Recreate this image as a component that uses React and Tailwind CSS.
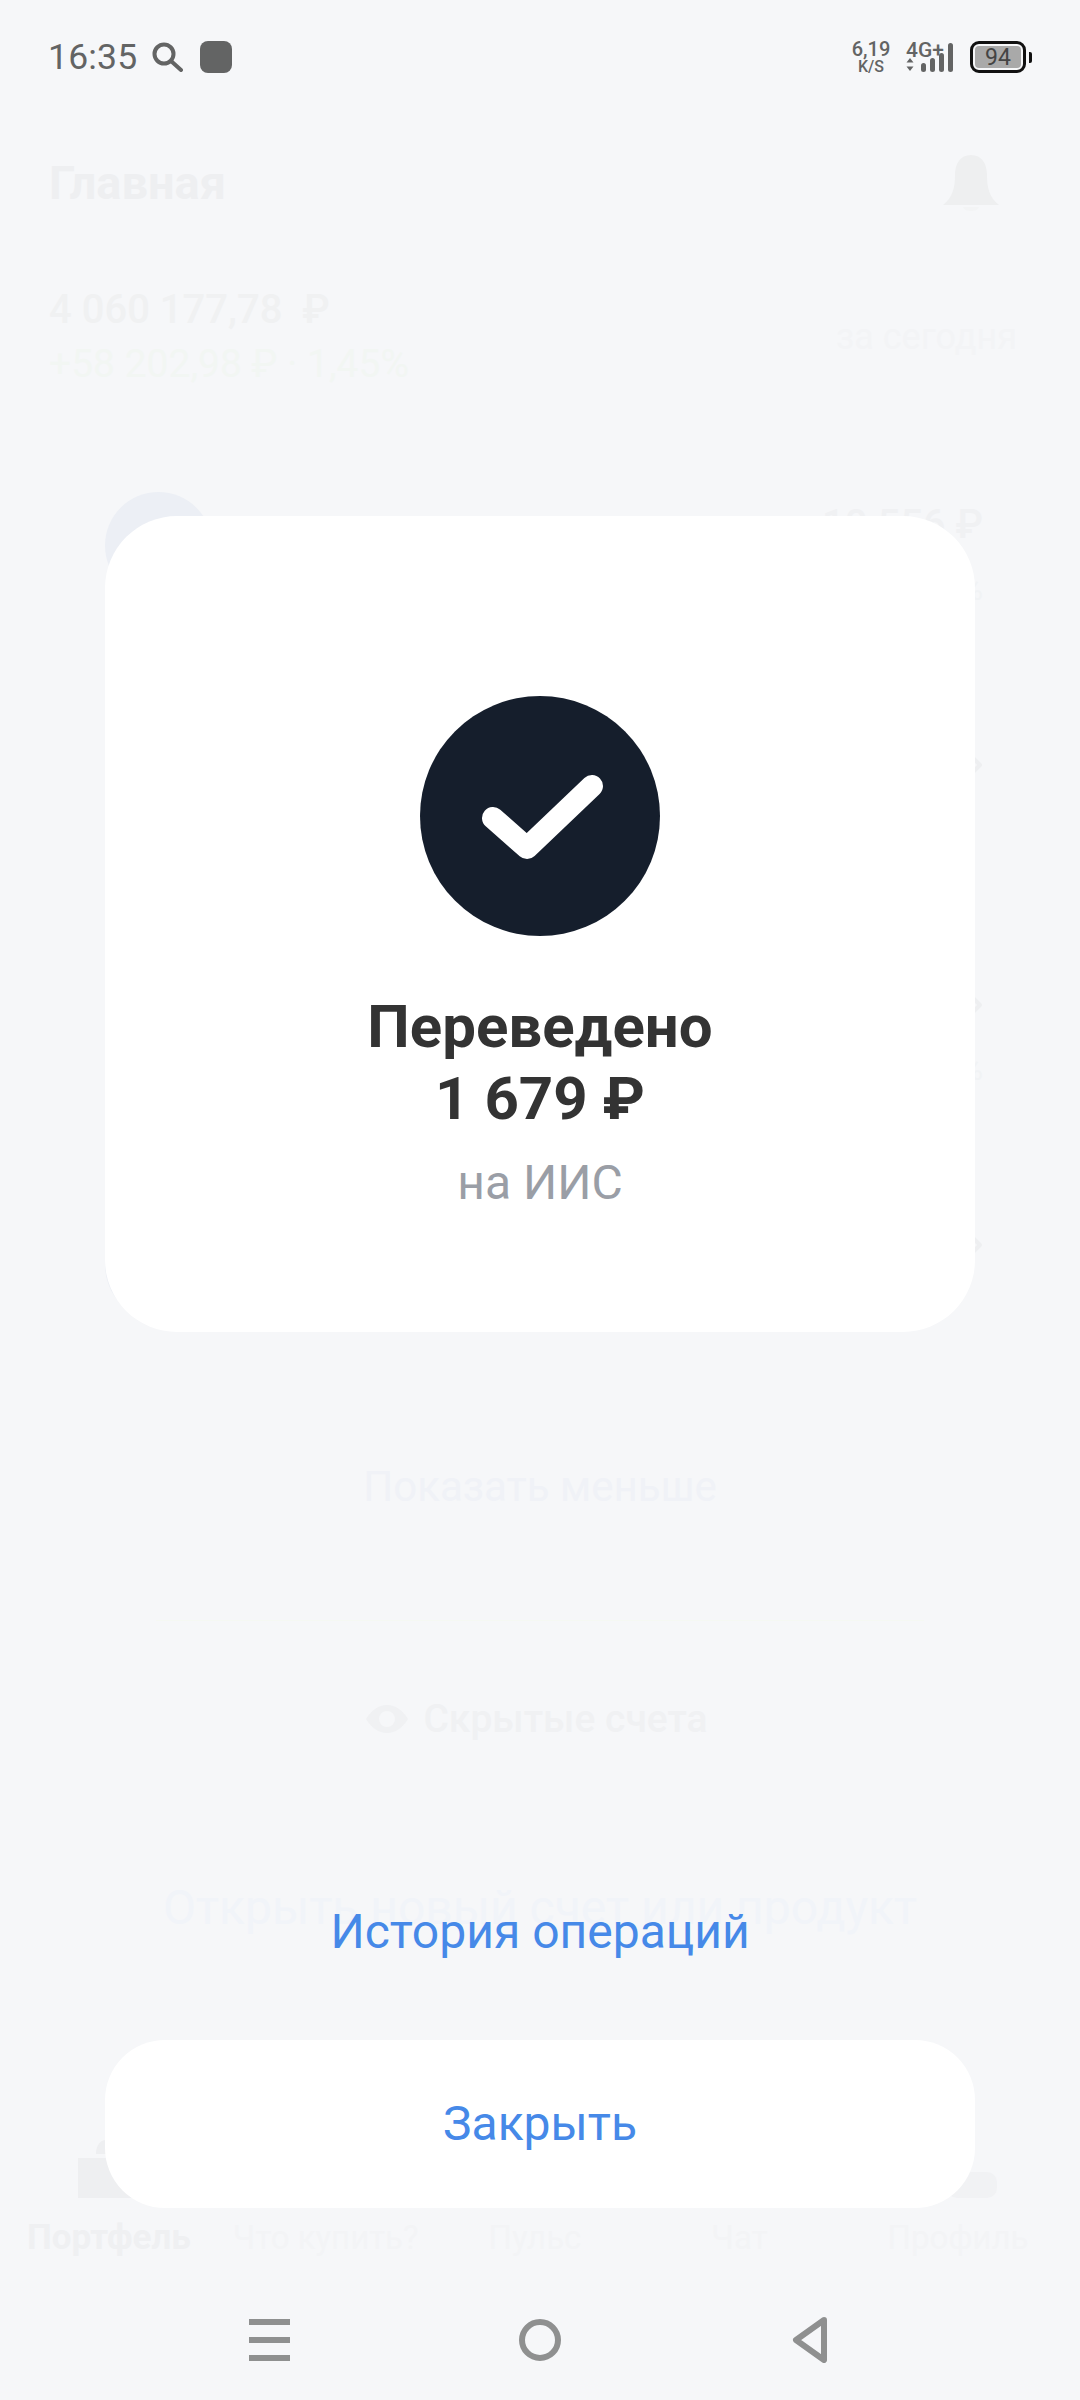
const font = { fontFamily: "Roboto, sans-serif" }

function Chevron() {
  return (
    <svg width="16" height="26" viewBox="0 0 16 26" fill="none" stroke="#eeeff1" strokeWidth="4" strokeLinecap="round" strokeLinejoin="round">
      <path d="M3 3l10 10L3 23" />
    </svg>
  )
}

function GhostRow({amount, sub, chevron}) {
  return (
    <div className="flex h-[240px] items-start">
      <div className="size-[107px] rounded-full bg-[#eceff5]" />
      <div className="ml-auto flex h-[150px] flex-col items-end pt-[10px]">
        <div className="flex h-[46px] items-center gap-2 text-[40px] font-medium text-[#f0f1f3]">
          {amount}
          {chevron && <Chevron />}
        </div>
        <div className="mt-[22px] text-[30px] leading-[40px] text-[#f1f3f5]">{sub}</div>
      </div>
    </div>
  )
}

// faded portfolio page that shows through the scrim
function BackgroundPage() {
  return (
    <div className="pt-[153px]">
      <div className="flex h-[60px] items-center justify-between pl-[49px] pr-[80px]">
        <span className="text-[47px] font-bold text-[#eeeff1]">Главная</span>
        <svg width="58" height="56" viewBox="0 0 58 56" fill="#eeeff0">
          <path d="M29 0c-11 0-16 9-16 20 0 12-2 22-12 30h56c-10-8-12-18-12-30C45 9 40 0 29 0z" />
          <path d="M21 52h16c-1 3-4 4-8 4s-7-1-8-4z" fill="#f3f4f5" />
        </svg>
      </div>

      <div className="mt-[70px] flex items-center justify-between pl-[49px] pr-[63px]">
        <div>
          <div className="text-[40px] font-medium leading-[54px] text-[#f0f1f2]">4 060 177,78&nbsp; ₽</div>
          <div className="text-[39px] leading-[54px] text-[#f2f6f3]">+58 202,98 ₽ · 1,45%</div>
        </div>
        <div className="text-[36px] text-[#f3f4f6]">за сегодня</div>
      </div>

      <div className="mt-[101px] pl-[105px] pr-[97px]">
        <GhostRow amount="10 556 ₽" sub="0 %" />
        <GhostRow chevron sub="" />
        <GhostRow chevron sub="0 %" />
        <GhostRow chevron sub="" />
      </div>

      <div className="mt-[10px] text-center text-[42px] leading-[50px] text-[#f0f2f7]">Показать меньше</div>
      <div className="mx-auto mt-[108px] h-px w-[768px] bg-[#f5f8f3]" />
      <div className="mt-[73px] flex h-[50px] items-center justify-center gap-[15px] pr-[6px] text-[39px] font-medium text-[#f0f1f3]">
        <svg width="42" height="28" viewBox="0 0 42 28" fill="#f0f1f3">
          <path fillRule="evenodd" d="M21 0C12 0 5 6 0 14c5 8 12 14 21 14s16-6 21-14C37 6 30 0 21 0zm0 22a8 8 0 110-16 8 8 0 010 16z" />
        </svg>
        Скрытые счета
      </div>
      <div className="mt-[136px] text-center text-[48px] leading-[56px] text-[#f1f4f9]">Открыть новый счет или продукт</div>

      <div className="mt-[204px] flex h-[58px] items-end justify-between pl-[78px] pr-[83px]">
        <svg width="60" height="58" viewBox="0 0 60 58" fill="#eeeff1">
          <path d="M18 14c0-8 4-14 10-14s10 6 10 14zM0 18h60v40H0z" />
        </svg>
        <div className="h-[26px] w-[50px] rounded-[10px] bg-[#f1f2f4]" />
      </div>
      <div className="mt-[20px] flex h-[40px] items-center text-[33px] text-[#f3f4f6]">
        <span className="ml-[27px] text-[35px] font-bold text-[#eff0f2]">Портфель</span>
        <span className="ml-[42px]">Что купить?</span>
        <span className="ml-[70px]">Пульс</span>
        <span className="ml-[130px]">Чат</span>
        <span className="ml-[120px]">Профиль</span>
      </div>
    </div>
  )
}

function StatusBar() {
  return (
    <div className="relative flex h-[100px] items-start justify-between pl-[48px] pr-[48px] pt-[41px] text-[#636464]">
      <div className="flex h-[32px] items-center">
        <span className="text-[35.500px] leading-[32px] tracking-[0.2px]">16:35</span>
        <svg className="ml-[15px]" width="31" height="30" viewBox="0 0 31 30" fill="none" stroke="#636464" strokeWidth="4">
          <circle cx="12" cy="12" r="9.500" />
          <path d="M19 19l10 9" strokeLinecap="round" />
        </svg>
        <div className="ml-[17px] size-[32px] rounded-[8px] bg-[#636464]" />
      </div>

      <div className="flex h-[32px] items-center">
        <div className="flex w-[40px] flex-col items-center font-medium">
          <span className="text-[20px] leading-[20px]">6,19</span>
          <span className="text-[16px] leading-[16px]">K/S</span>
        </div>
        <div className="ml-[15px] flex h-[32px] w-[48px] flex-col">
          <span className="text-[21px] font-medium leading-[18px]">4G+</span>
        </div>
        <svg className="ml-[-48px]" width="48" height="32" viewBox="0 0 48 32" fill="#636464">
          <path d="M4 17l3.500 4.500h-7zM4 30l3.500-4.500h-7z" />
          <rect x="15" y="22" width="5" height="9" rx="2.500" />
          <rect x="24" y="17" width="5" height="14" rx="2.500" />
          <rect x="33" y="12" width="5" height="19" rx="2.500" />
          <rect x="42" y="2" width="5" height="29" rx="2.500" />
        </svg>
        <div className="ml-[16px] flex h-[32px] w-[56px] items-center justify-center rounded-[9px] border-[3px] border-[#111111] p-[2px]">
          <div className="flex h-full w-full items-center justify-center rounded-[4px] bg-[#a9a9a9] text-[23px] leading-none text-[#444444]">94</div>
        </div>
        <div className="ml-[3px] h-[11px] w-[3px] rounded-r-[2px] bg-[#111111]" />
      </div>
    </div>
  )
}

function NavBar() {
  return (
    <div className="mt-[109px] flex gap-[228px] pl-[249px]">
      <svg width="42" height="46" viewBox="0 0 42 46" fill="#8f9090">
        <rect x="0" y="2" width="41" height="6" />
        <rect x="0" y="20" width="41" height="6" />
        <rect x="0" y="38" width="41" height="6" />
      </svg>
      <svg width="42" height="46" viewBox="0 0 42 46" fill="none" stroke="#8f9090" strokeWidth="6">
        <circle cx="21" cy="23" r="18" />
      </svg>
      <svg width="42" height="46" viewBox="0 0 42 46" fill="none" stroke="#8f9090" strokeWidth="6" strokeLinejoin="round">
        <path d="M35 3L7 23l28 20z" />
      </svg>
    </div>
  )
}

export default function App() {
  return (
    <div className="relative h-[2400px] w-[1080px] overflow-hidden bg-[#f6f7f9]" style={font}>
      <BackgroundPage />

      <div className="absolute inset-0 flex flex-col">
        <StatusBar />

        <div className="mx-[105px] mt-[416px] flex h-[816px] flex-col items-center rounded-[72px] bg-white">
          <div className="mt-[180px] size-[240px] rounded-full bg-[#151e2c]">
            <svg width="240" height="240" viewBox="0 0 240 240" fill="none" stroke="#ffffff" strokeWidth="22" strokeLinecap="round" strokeLinejoin="round">
              <path d="M73 122l34 30 65-62" />
            </svg>
          </div>
          <div className="mt-[55px] text-center text-[60px] font-bold leading-[72px] text-[#333333]">
            Переведено
            <br />
            1 679 ₽
          </div>
          <div className="mt-[20px] text-[48px] leading-[56px] text-[#9a9ea6]">на ИИС</div>
        </div>

        <div className="mt-[572px] text-center text-[48px] leading-[56px] text-[#4689e8]">История операций</div>

        <div className="mx-[105px] mt-[80px] flex h-[168px] items-center justify-center rounded-[60px] bg-white text-[48px] text-[#4689e8]">
          Закрыть
        </div>

        <NavBar />
      </div>
    </div>
  )
}
